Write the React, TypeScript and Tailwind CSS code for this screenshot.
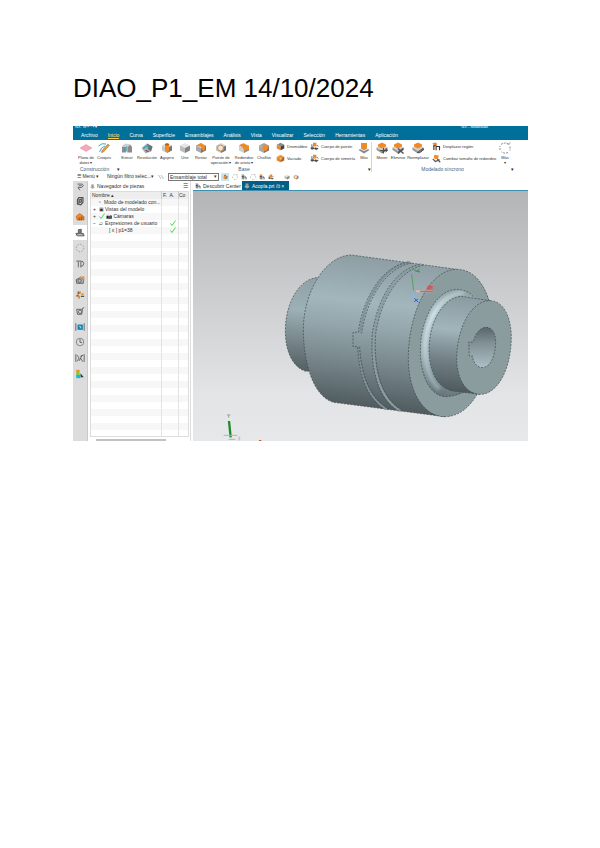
import { useState } from 'react';
import type { ReactNode } from 'react';

const MENUS = [
  'Archivo',
  'Inicio',
  'Curva',
  'Superficie',
  'Ensamblajes',
  'Análisis',
  'Vista',
  'Visualizar',
  'Selección',
  'Herramientas',
  'Aplicación',
];

type IconKind =
  | 'plane'
  | 'sketch'
  | 'extrude'
  | 'revolve'
  | 'hole'
  | 'unite'
  | 'subtract'
  | 'pattern'
  | 'blend'
  | 'chamfer'
  | 'draft'
  | 'shell'
  | 'copy'
  | 'stack'
  | 'move'
  | 'delete'
  | 'replace'
  | 'offset'
  | 'resize'
  | 'more';

const ORANGE = '#f08a24';

// Isometric block, each face with its own colour
const Cube = ({ top = '#d9d9d9', left = '#a9a9a9', right = '#777777' }) => (
  <>
    <path d="M12 2 22 7 12 12 2 7Z" fill={top} />
    <path d="M2 7 12 12V22L2 17Z" fill={left} />
    <path d="M22 7 12 12V22L22 17Z" fill={right} />
  </>
);

// Wide grey block with a raised orange plate on top
const Plate = () => (
  <>
    <path d="M1 11 12 5 23 11 12 18Z" fill="#d0d0d0" />
    <path d="M1 11 12 18V23L1 16Z" fill="#9a9a9a" />
    <path d="M23 11 12 18V23L23 16Z" fill="#6f6f6f" />
    <path d="M4 5 12 1 20 5V9L12 13 4 9Z" fill={ORANGE} />
  </>
);

const icons: Record<IconKind, ReactNode> = {
  plane: <path d="M0 12 12 5 24 12 12 19Z" fill="#f4a9b8" stroke="#e58fa3" />,
  sketch: (
    <>
      <path d="M1 8Q8 1 16 4M3 20Q6 10 14 8" fill="none" stroke="#49a5c4" strokeWidth="2" />
      <path d="M20 4 23 7 11 20 7 21 8 17Z" fill="#e8a13a" stroke="#8a6a3a" />
    </>
  ),
  extrude: (
    <>
      <path d="M2 21V10Q6 2 10 8V21ZM13 21V9Q18 2 22 10V21Z" fill="#8c8c8c" />
      <path d="M2 10 8 3 20 5 13 10Z" fill="#cfcfcf" />
      <path d="M10 8 13 9V21L10 18Z" fill="#66b5cc" />
    </>
  ),
  revolve: (
    <>
      <path d="M1 12 12 3 23 9 20 19 9 23Z" fill="#b0b0b0" />
      <path d="M12 3 23 9 20 19 14 14Z" fill="#6f6f6f" />
      <path d="M5 13Q11 5 17 10" fill="none" stroke="#37a3c4" strokeWidth="3" />
      <path d="M9 17 15 19" stroke="#444444" strokeWidth="2" />
    </>
  ),
  hole: (
    <>
      <Cube left="#c9c9c9" />
      <path d="M8 4Q12 1 16 4V18Q12 22 8 18Z" fill={ORANGE} />
      <ellipse cx="12" cy="5" rx="4" ry="2" fill="#b85d0d" />
    </>
  ),
  unite: <Cube top="#e6e6e6" left="#bcbcbc" right="#858585" />,
  subtract: (
    <>
      <Cube />
      <path d="M2 7 12 2 20 7 19 18 13 15V10Z" fill={ORANGE} />
    </>
  ),
  pattern: (
    <>
      <Cube left="#c8c8c8" />
      <circle cx="11" cy="12" r="6" fill="#e6e6e6" stroke="#d98a3a" strokeWidth="2" />
    </>
  ),
  blend: (
    <>
      <Cube left="#cfcfcf" right="#8e8e8e" />
      <path d="M2 7Q10 0 15 5L22 8V14L12 18Q11 9 2 7Z" fill={ORANGE} />
    </>
  ),
  chamfer: (
    <>
      <Cube top="#a5a5a5" />
      <path d="M12 5 22 8 16 19 8 14Z" fill={ORANGE} />
    </>
  ),
  draft: <Cube top="#8b8b8b" left={ORANGE} right="#444444" />,
  shell: (
    <>
      <Cube top="#f6a750" left={ORANGE} right="#b96312" />
      <circle cx="12" cy="12" r="5" fill="#f6b060" stroke="#714216" />
    </>
  ),
  copy: (
    <>
      <path d="M8 2H17V12H8Z" fill={ORANGE} />
      <path d="M1 15 8 11 12 17 5 21ZM14 14 22 17 18 22 12 20Z" fill="#777777" />
      <path d="M5 6V13M2 17H22M18 8 22 12" stroke="#333333" strokeWidth="2" />
    </>
  ),
  stack: (
    <>
      <path d="M1 16 12 10 23 16 12 23Z" fill="#8a8a8a" />
      <path d="M6 2H18V12L12 15 6 12Z" fill={ORANGE} />
      <path d="M3 13 12 17 21 13" fill="none" stroke="#eeeeee" strokeWidth="2" />
    </>
  ),
  move: (
    <>
      <Plate />
      <path d="M8 17H22M15 12V23M19 14 23 17 19 20" stroke="#4d4d4d" strokeWidth="2" fill="none" />
    </>
  ),
  delete: (
    <>
      <Plate />
      <path d="M12 13 23 23M23 13 12 23" stroke="#555555" strokeWidth="3" />
    </>
  ),
  replace: (
    <>
      <Plate />
      <path d="M10 21Q19 23 22 14M19 16 22 13 24 17" stroke="#555555" strokeWidth="2" fill="none" />
    </>
  ),
  offset: (
    <>
      <path d="M1 3 10 1 15 6 6 10Z" fill={ORANGE} />
      <path d="M5 10V21M11 12V22M11 12H20V22M3 10H12" stroke="#333333" strokeWidth="3" fill="none" />
    </>
  ),
  resize: (
    <>
      <path d="M6 2 18 4 16 14 5 12Z" fill={ORANGE} />
      <path d="M2 13 9 20 20 15M14 14 22 22" stroke="#555555" strokeWidth="3" fill="none" />
    </>
  ),
  more: (
    <path
      d="M4 5Q12-1 20 5M22 9V17M18 21Q12 24 5 20M2 16V8M17 4H22V1"
      fill="none"
      stroke="#666666"
      strokeWidth="1.5"
      strokeDasharray="4 2"
    />
  ),
};

const Icon = ({ kind, className }: { kind: IconKind; className: string }) => (
  <svg viewBox="0 0 24 24" className={`shrink-0 ${className}`} aria-hidden="true">
    {icons[kind]}
  </svg>
);

interface ToolProps {
  kind: IconKind;
  lines: string[];
  width: string;
}

const Tool = ({ kind, lines, width }: ToolProps) => (
  <button
    type="button"
    className={`flex shrink-0 flex-col items-center text-[4px] leading-[5px] whitespace-nowrap ${width}`}
  >
    <Icon kind={kind} className="mb-px size-3" />
    {lines.map((line) => (
      <span key={line}>{line}</span>
    ))}
  </button>
);

const SmallTool = ({ kind, label }: { kind: IconKind; label: string }) => (
  <button
    type="button"
    className="flex items-center gap-[2px] text-[4px] leading-[5px] whitespace-nowrap"
  >
    <Icon kind={kind} className="size-[9px]" />
    {label}
  </button>
);

const Ribbon = () => (
  <div className="flex h-8 bg-white pt-[2px] pl-1">
    <section className="flex flex-col">
      <div className="flex h-6">
        <Tool kind="plane" lines={['Plano de', 'datos ▾']} width="w-[18px]" />
        <Tool kind="sketch" lines={['Croquis']} width="w-[18px]" />
      </div>
      <div className="flex gap-1 pl-[3px] text-[5px] leading-[6px] text-[#3a6684]">
        Construcción
      </div>
    </section>
    <section className="flex flex-col border-r border-[#d5d5d5] pl-1">
      <div className="flex h-6">
        <Tool kind="extrude" lines={['Extruir']} width="w-5" />
        <Tool kind="revolve" lines={['Revolución']} width="w-5" />
        <Tool kind="hole" lines={['Agujero']} width="w-5" />
        <Tool kind="unite" lines={['Unir']} width="w-4" />
        <Tool kind="subtract" lines={['Restar']} width="w-4" />
        <Tool kind="pattern" lines={['Patrón de', 'operación ▾']} width="w-6" />
        <Tool kind="blend" lines={['Redondeo', 'de arista ▾']} width="w-[22px]" />
        <Tool kind="chamfer" lines={['Chaflán']} width="w-[18px]" />
        <div className="flex w-[37px] flex-col gap-[3px] pl-[3px]">
          <SmallTool kind="draft" label="Desmoldeo" />
          <SmallTool kind="shell" label="Vaciado" />
        </div>
        <div className="flex w-[47px] flex-col gap-[3px]">
          <SmallTool kind="copy" label="Cuerpo de patrón" />
          <SmallTool kind="copy" label="Cuerpo de simetría" />
        </div>
        <Tool kind="stack" lines={['Más']} width="w-[14px]" />
      </div>
      <div className="flex justify-between text-[5px] leading-[6px] text-[#3a6684]">
        <span className="text-[#222222]">▾</span>
        <span>Base</span>
        <span className="text-[#222222]">▾</span>
      </div>
    </section>
    <section className="flex flex-col pl-[2px]">
      <div className="flex h-6">
        <Tool kind="move" lines={['Mover']} width="w-4" />
        <Tool kind="delete" lines={['Eliminar']} width="w-4" />
        <Tool kind="replace" lines={['Reemplazar']} width="w-6" />
        <div className="flex w-[66px] flex-col gap-[3px] pl-[2px]">
          <SmallTool kind="offset" label="Desplazar región" />
          <SmallTool kind="resize" label="Cambiar tamaño de redondeo" />
        </div>
        <Tool kind="more" lines={['Más', '▾']} width="w-[18px]" />
      </div>
      <div className="flex justify-between text-[5px] leading-[6px] text-[#3a6684]">
        <span />
        <span>Modelado síncrono</span>
        <span className="text-[#222222]">▾</span>
      </div>
    </section>
  </div>
);

const SelectionBar = () => (
  <div className="flex h-[9px] items-center bg-white pl-1 text-[5px] leading-[7px] text-[#333333]">
    <button type="button" className="w-[30px] text-left">
      ☰ Menú ▾
    </button>
    <select
      aria-label="Filtro de selección"
      className="h-[7px] w-[44px] appearance-none bg-[#fafafa]"
    >
      <option>Ningún filtro selec...</option>
    </select>
    <span className="w-[3px]">▾</span>
    <svg viewBox="0 0 12 12" className="mx-1 size-[6px]" aria-hidden="true">
      <path d="M1 2 6 10M6 2 11 10" stroke="#aaaaaa" strokeWidth="1.5" />
    </svg>
    <div className="flex h-2 w-[51px] items-center justify-between border border-[#777777] px-px">
      <select aria-label="Ámbito" className="h-[6px] w-11 appearance-none leading-[6px]">
        <option>Ensamblaje total</option>
      </select>
      <span>▾</span>
    </div>
    <div className="flex items-center gap-[3px] pl-[2px]">
      <span className="flex size-2 items-center justify-center bg-[#cbe6f1]">
        <Icon kind="hole" className="size-[6px]" />
      </span>
      <Icon kind="more" className="size-[6px]" />
      <Icon kind="offset" className="size-[6px] grayscale" />
      <Icon kind="more" className="size-[6px]" />
      <Icon kind="offset" className="size-[6px]" />
      <Icon kind="copy" className="size-[6px]" />
      <span className="w-1" />
      <Icon kind="unite" className="size-[6px]" />
      <Icon kind="pattern" className="size-[6px]" />
    </div>
  </div>
);

const sideIcons: { name: string; art: ReactNode }[] = [
  {
    name: 'Ensamblajes',
    art: <path d="M6 5H17L20 9 16 13H7L12 20M9 9H16" />,
  },
  {
    name: 'Restricciones',
    art: <path d="M9 4H19V15L14 21 6 19V9ZM10 9 15 8V14L10 16Z" strokeWidth="3" />,
  },
  {
    name: 'Piezas',
    art: (
      <>
        <path d="M3 10 11 4 18 8V19H5Z" fill={ORANGE} stroke="#d0661b" />
        <path d="M10 20V13M15 20V11M21 20V10" stroke="#7b3d12" />
      </>
    ),
  },
  {
    name: 'Navegador de piezas',
    art: (
      <>
        <path d="M8 4 15 3V11L8 12Z" fill="#777777" />
        <path d="M2 13H20L22 19H6Z" fill="#b8b8b8" />
        <path d="M6 12 3 18M15 12 20 16" />
      </>
    ),
  },
  {
    name: 'Reutilización',
    art: <circle cx="12" cy="12" r="9" strokeDasharray="3 4" stroke="#888888" />,
  },
  {
    name: 'Vistas',
    art: <path d="M3 5H14Q21 5 21 11T14 18M8 6V20M14 6V20" />,
  },
  {
    name: 'Biblioteca',
    art: (
      <>
        <path d="M3 11 13 6 20 11V20H4Z" fill="#bbbbbb" />
        <path d="M12 5H21V14" stroke={ORANGE} strokeWidth="3" />
        <circle cx="11" cy="14" r="4" />
      </>
    ),
  },
  {
    name: 'Procesos',
    art: (
      <>
        <path d="M12 3V9M5 8 9 11M15 11 21 9M10 14V21" stroke={ORANGE} strokeWidth="4" />
        <path d="M3 14H9M14 15H22M7 4 10 9" strokeWidth="3" />
      </>
    ),
  },
  {
    name: 'Materiales',
    art: (
      <>
        <path d="M4 8H18L16 20H6Z" />
        <circle cx="12" cy="14" r="4" />
        <path d="M17 6 22 4" />
      </>
    ),
  },
  {
    name: 'Internet',
    art: (
      <>
        <path d="M2 3V21M22 3V21" />
        <path d="M7 7H18V18H7Z" fill="#178ab5" stroke="#178ab5" />
        <path d="M10 10Q14 9 14 15" stroke="#cdeaf5" />
      </>
    ),
  },
  {
    name: 'Historial',
    art: (
      <>
        <circle cx="12" cy="12" r="9" strokeWidth="1.5" />
        <path d="M12 5V13H17" />
      </>
    ),
  },
  {
    name: 'Funciones',
    art: <path d="M2 3V21M22 3V21M5 5 10 12 5 20M10 19 17 5M13 8 20 5M13 12 19 21" />,
  },
  {
    name: 'Colores',
    art: (
      <>
        <path d="M3 2H11V9H3Z" fill="#ed9130" stroke="none" />
        <path d="M3 8H11V15H3Z" fill="#7ed321" stroke="none" />
        <path d="M3 14H13V22H3Z" fill="#19b4e8" stroke="none" />
        <path d="M13 10 21 20H14Z" fill="#333333" stroke="none" />
      </>
    ),
  },
];

const SideBar = () => (
  <nav
    aria-label="Barra de recursos"
    className="flex w-[15px] shrink-0 flex-col border-r border-[#c9c9c9] bg-[#dcdcdc]"
  >
    {sideIcons.map(({ name, art }, i) => (
      <button
        key={name}
        type="button"
        aria-label={name}
        className={`flex items-center justify-center ${
          i === 0 ? 'h-3' : i % 3 === 0 ? 'h-[15px]' : 'h-4'
        } ${i === 3 ? 'bg-white' : ''}`}
      >
        <svg
          viewBox="0 0 24 24"
          className="size-[10px]"
          fill="none"
          stroke="#555555"
          strokeWidth="2"
        >
          {art}
        </svg>
      </button>
    ))}
  </nav>
);

const TREE = [
  { mark: '', icon: '◔', label: 'Modo de modelado con...', done: false, indent: 'pl-[7px]' },
  { mark: '+', icon: '▣', label: 'Vistas del modelo', done: false, indent: 'pl-[2px]' },
  { mark: '+', icon: '✓', label: '📷 Cámaras', done: false, indent: 'pl-[2px]' },
  { mark: '−', icon: '▱', label: 'Expresiones de usuario', done: true, indent: 'pl-[2px]' },
  { mark: '', icon: '', label: '[ x ] p1=38', done: true, indent: 'pl-3' },
];

const EMPTY_ROWS = 29;

const Check = () => (
  <svg viewBox="0 0 12 12" className="size-[6px] shrink-0" role="img" aria-label="Actualizado">
    <path d="M1 7 4 11 11 1" fill="none" stroke="#3fdc4c" strokeWidth="2" />
  </svg>
);

const PartNavigator = () => (
  <aside className="flex w-[103px] shrink-0 flex-col border-r border-[#dddddd] pr-px pl-[2px] text-[5px] leading-[6px] text-[#333333]">
    <header className="flex h-[10px] items-center justify-between pr-px">
      <h2 className="flex items-center gap-[2px]">
        <Icon kind="stack" className="size-[5px] grayscale" />
        Navegador de piezas
      </h2>
      <button type="button" aria-label="Opciones" className="text-[6px]">
        ☰
      </button>
    </header>
    <table className="w-full table-fixed border-collapse border border-[#dddddd]">
      <thead>
        <tr className="h-[7px] bg-[#eeeeee] text-left">
          <th className="border-r border-[#cccccc] p-0 pl-px font-normal">Nombre ▴</th>
          <th className="w-2 p-0 pl-px font-normal">F.</th>
          <th className="w-[9px] border-r border-[#cccccc] p-0 font-normal">A.</th>
          <th className="w-[10px] p-0 font-normal whitespace-nowrap">Co</th>
        </tr>
      </thead>
      <tbody>
        {TREE.map((row) => (
          <tr key={row.label} className="h-[7px] odd:bg-[#f7f7f7]">
            <td className={`border-r border-[#e3e3e3] p-0 ${row.indent}`}>
              <div className="flex h-[7px] items-center gap-px whitespace-nowrap">
                {row.mark && <span className="w-[5px] shrink-0">{row.mark}</span>}
                {row.icon === '✓' ? (
                  <Check />
                ) : (
                  <span className="w-[5px] shrink-0">{row.icon}</span>
                )}
                <span>{row.label}</span>
              </div>
            </td>
            <td className="p-0" />
            <td className="border-r border-[#e3e3e3] p-0">{row.done && <Check />}</td>
            <td className="p-0" />
          </tr>
        ))}
        {Array.from({ length: EMPTY_ROWS }, (_, i) => (
          <tr key={i} className="h-[7px] odd:bg-[#f7f7f7]">
            <td className="border-r border-[#e3e3e3] p-0" />
            <td className="p-0" />
            <td className="border-r border-[#e3e3e3] p-0" />
            <td className="p-0" />
          </tr>
        ))}
      </tbody>
    </table>
    <div className="mt-auto flex h-[2px] px-[6px]">
      <div className="w-[70px] bg-[#c2c2c2]" />
    </div>
  </aside>
);

const EDGE = { fill: 'none', stroke: '#39454a', strokeWidth: 2, strokeDasharray: '6 4' };

const Model = () => (
  <svg
    viewBox="9 48 1005 750"
    preserveAspectRatio="xMidYMid slice"
    className="block h-[250px] w-full"
    role="img"
    aria-label="Acoplamiento con eje"
  >
    <defs>
      <linearGradient id="sky" x1="0" y1="0" x2="0" y2="1">
        <stop offset="0" stopColor="#b3b4b6" />
        <stop offset="0.5" stopColor="#d0d2d4" />
        <stop offset="0.8" stopColor="#e3e4e6" />
        <stop offset="1" stopColor="#e7e8ea" />
      </linearGradient>
      <linearGradient id="body" gradientUnits="userSpaceOnUse" x1="600" y1="250" x2="550" y2="705">
        <stop offset="0" stopColor="#8d9ea3" />
        <stop offset="0.3" stopColor="#a2b6bc" />
        <stop offset="0.48" stopColor="#93a5aa" />
        <stop offset="0.75" stopColor="#718085" />
        <stop offset="1" stopColor="#4e595c" />
      </linearGradient>
      <linearGradient id="rear" gradientUnits="userSpaceOnUse" x1="350" y1="307" x2="320" y2="590">
        <stop offset="0" stopColor="#8fa1a6" />
        <stop offset="0.35" stopColor="#9cb0b5" />
        <stop offset="1" stopColor="#525d60" />
      </linearGradient>
      <linearGradient id="fillet" gradientUnits="userSpaceOnUse" x1="800" y1="343" x2="750" y2="665">
        <stop offset="0" stopColor="#8fa1a4" />
        <stop offset="0.2" stopColor="#a9bdc2" />
        <stop offset="0.65" stopColor="#9db0b5" />
        <stop offset="1" stopColor="#667478" />
      </linearGradient>
      <linearGradient id="shine" gradientUnits="userSpaceOnUse" x1="820" y1="343" x2="740" y2="650">
        <stop offset="0" stopColor="#a8bbc0" />
        <stop offset="0.3" stopColor="#d3e5e9" />
        <stop offset="0.6" stopColor="#c0d4d9" />
        <stop offset="1" stopColor="#8d9fa4" />
      </linearGradient>
      <linearGradient id="shaft" gradientUnits="userSpaceOnUse" x1="850" y1="370" x2="820" y2="655">
        <stop offset="0" stopColor="#8b9ca1" />
        <stop offset="0.35" stopColor="#a1b5bb" />
        <stop offset="0.65" stopColor="#748388" />
        <stop offset="1" stopColor="#4d585b" />
      </linearGradient>
      <linearGradient id="bore" x1="0" y1="0" x2="0" y2="1">
        <stop offset="0" stopColor="#59666a" />
        <stop offset="0.4" stopColor="#819196" />
        <stop offset="1" stopColor="#acc0c5" />
      </linearGradient>
      <filter id="glow" x="-50%" y="-10%" width="200%" height="120%">
        <feGaussianBlur stdDeviation="5" />
      </filter>
    </defs>
    <rect x="0" y="40" width="1030" height="770" fill="url(#sky)" />

    <path
      d="M395 307C335 304 286 375 286 470C287 535 312 582 355 590L430 520V307Z"
      fill="url(#rear)"
    />
    <path d="M390 308C335 304 286 375 286 470C287 535 312 582 352 590" {...EDGE} />

    <path
      d="M484 240L800 283 765 725 430 682C370 664 340 565 340 460C342 350 405 242 484 240Z"
      fill="url(#body)"
    />
    <path
      d="M765 725L430 682C370 664 340 565 340 460C342 350 405 242 484 240L800 283"
      {...EDGE}
    />

    {/* grooves and the notch between them */}
    <path
      d="M660 262C580 275 524 370 510 472M504 515C509 605 538 672 590 703"
      fill="none"
      stroke="#7f9196"
      strokeWidth="6"
    />
    <path
      d="M695 268C612 290 566 380 551 480C543 590 573 675 632 708"
      fill="none"
      stroke="#8a9da2"
      strokeWidth="7"
    />
    <path d="M655 261C575 274 518 370 505 472H489V515H503C507 605 533 672 583 703" {...EDGE} />
    <path d="M665 264C588 278 530 370 515 475M509 515C514 605 543 672 597 703" {...EDGE} />
    <path d="M689 268C607 287 561 380 547 475C540 590 567 675 626 708" {...EDGE} />
    <path d="M700 270C621 290 572 380 557 475C549 590 579 675 638 708" {...EDGE} />

    <path
      d="M800 283C865 283 909 360 909 458C909 600 850 725 765 725C700 725 655 650 655 550C655 410 720 283 800 283Z"
      fill="#8b9c9f"
    />
    <path
      d="M897 377C878 320 848 283 800 283C720 283 655 410 655 550C655 650 700 725 765 725C808 724 838 697 862 657"
      {...EDGE}
    />

    <path
      d="M800 343C735 345 691 440 691 525C691 610 725 665 768 665C800 663 815 655 828 652L860 373C845 352 823 343 800 343Z"
      fill="url(#fillet)"
    />
    <path
      d="M822 354C755 354 711 430 706 505C704 570 720 615 748 642"
      fill="none"
      stroke="url(#shine)"
      strokeWidth="13"
      filter="url(#glow)"
    />
    <path
      d="M850 365C838 350 820 343 800 343C735 345 691 440 691 525C691 610 725 665 768 665C790 664 805 658 815 652"
      {...EDGE}
    />

    <path
      d="M815 364L900 377 870 658 788 648C742 638 717 590 717 520C720 430 765 366 815 364Z"
      fill="url(#shaft)"
    />
    <path d="M870 658L788 648C742 638 717 590 717 520C720 430 765 366 815 364L900 377" {...EDGE} />
    <path
      d="M900 377C940 378 964 425 964 490C962 585 922 658 870 658C828 657 800 612 800 550C801 455 846 376 900 377Z"
      fill="#8b9c9f"
    />
    <path
      d="M900 377C940 378 964 425 964 490C962 585 922 658 870 658C828 657 800 612 800 550C801 455 846 376 900 377Z"
      {...EDGE}
    />
    <path
      d="M888 457C906 457 917 475 917 501C916 545 900 578 876 578C860 577 850 563 847 543H838L836 501H850C856 475 870 458 888 457Z"
      fill="url(#bore)"
    />
    <path
      d="M888 457C906 457 917 475 917 501C916 545 900 578 876 578C860 577 850 563 847 543H838L836 501H850C856 475 870 458 888 457Z"
      {...EDGE}
    />

    {/* datum axes */}
    <g fill="none" strokeWidth="3">
      <path d="M665 298 671 346" stroke="#58a05c" />
      <path d="M672 284 679 289 688 283M679 289H688V293" stroke="#2f9a35" />
      <path d="M678 349H730" stroke="#f2b5b0" strokeWidth="5" />
      <path d="M690 349H730M712 335H728L712 342H728" stroke="#dd4b42" />
      <path d="M667 357 672 368" stroke="#7db9ee" strokeWidth="5" />
      <path d="M673 370 685 382M684 372 673 380" stroke="#2459d8" />
    </g>

    {/* view triad */}
    <path d="M111 720H121M116 721V728" stroke="#73b577" strokeWidth="3" />
    <path d="M117 738 119 757 122 787" stroke="#1f8a28" strokeWidth="7" fill="none" />
    <path d="M101 781H142M116 793H136" stroke="#b0b4b5" strokeWidth="3" />
    <path d="M148 785V796" stroke="#c0c4c5" strokeWidth="5" />
    <path d="M207 797H214" stroke="#e0562f" strokeWidth="4" />
  </svg>
);

const Workspace = () => (
  <main className="flex min-w-0 flex-1 flex-col pl-[2px]">
    <div className="flex h-[9px] text-[5px] leading-[8px] text-[#333333]">
      <button
        type="button"
        className="flex w-[49px] items-center gap-[2px] pl-[2px] whitespace-nowrap"
      >
        <Icon kind="offset" className="size-[6px] grayscale" />
        Descubrir Center
      </button>
      <button
        type="button"
        className="flex w-[47px] items-center gap-[2px] bg-[#005f87] pl-[2px] whitespace-nowrap text-white"
      >
        <Icon kind="stack" className="size-[6px] grayscale" />
        Acopla.prt ⊡ ×
      </button>
    </div>
    <div className="border-t border-[#3f8fae]">
      <Model />
    </div>
  </main>
);

const App = () => {
  const [menu, setMenu] = useState('Inicio');

  return (
    <div className="bg-white pt-[72px] pr-[72px] pl-[73px] font-['Liberation_Sans',Arial,sans-serif] text-black">
      <h1 className="text-[26px] leading-[32px] whitespace-nowrap">DIAO_P1_EM 14/10/2024</h1>

      <div className="mt-[22px] overflow-hidden text-[#333333]">
        <header className="bg-[#00709a] text-[5px] leading-[5px] text-white">
          <div className="flex h-[3px] items-end justify-between pr-10 pl-[2px] text-[4px] leading-[4px]">
            <span>NX&nbsp; ⊟ ↶ ↷ ▾</span>
            <span>NX - Modelado</span>
          </div>
          <nav className="flex h-[11px] items-center gap-[10px] pt-px pl-2">
            {MENUS.map((name) => (
              <button
                key={name}
                type="button"
                onClick={() => setMenu(name)}
                className={`border-b leading-[6px] ${
                  name === menu ? 'border-[#f5c842] text-[#ffe27a]' : 'border-transparent'
                }`}
              >
                {name}
              </button>
            ))}
          </nav>
        </header>
        <Ribbon />
        <SelectionBar />
        <div className="flex bg-white">
          <SideBar />
          <PartNavigator />
          <Workspace />
        </div>
      </div>
    </div>
  );
};

export default App;
